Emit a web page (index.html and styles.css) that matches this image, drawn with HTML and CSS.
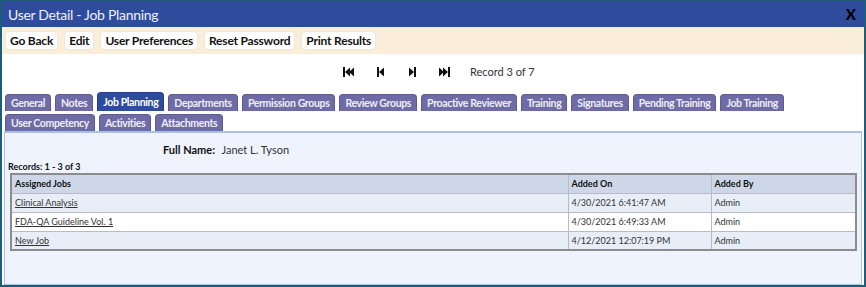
FILE: index.html
```html
<!DOCTYPE html>
<html lang="en">
  <head>
    <meta charset="UTF-8" />
    <meta name="viewport" content="width=device-width, initial-scale=1.0" />
    <title>User Detail - Job Planning</title>
    <link rel="stylesheet" href="styles.css">
  </head>
  <body>
    <div class="frame">
      <div class="titlebar">
        <span class="title">User Detail - Job Planning</span>
        <span class="close">X</span>
      </div>

      <div class="toolbar">
        <button class="btn">Go Back</button>
        <button class="btn">Edit</button>
        <button class="btn">User Preferences</button>
        <button class="btn">Reset Password</button>
        <button class="btn">Print Results</button>
      </div>

      <div class="pager">
        <!-- first -->
        <svg class="nav-icon" width="12" height="10" viewBox="0 0 12 10">
          <rect x="0" y="0" width="2" height="10" />
          <polygon points="2,5 7,0.5 7,9.5" />
          <polygon points="6,5 11,0.5 11,9.5" />
        </svg>
        <!-- prev -->
        <svg class="nav-icon" width="8" height="10" viewBox="0 0 8 10">
          <rect x="0" y="0" width="2" height="10" />
          <polygon points="2,5 7,0.5 7,9.5" />
        </svg>
        <!-- next -->
        <svg class="nav-icon" width="8" height="10" viewBox="0 0 8 10">
          <polygon points="1,0.5 6,5 1,9.5" />
          <rect x="6" y="0" width="2" height="10" />
        </svg>
        <!-- last -->
        <svg class="nav-icon" width="12" height="10" viewBox="0 0 12 10">
          <polygon points="1,0.5 6,5 1,9.5" />
          <polygon points="5,0.5 10,5 5,9.5" />
          <rect x="10" y="0" width="2" height="10" />
        </svg>
        <span class="record">Record 3 of 7</span>
      </div>

      <div class="tabs">
        <div class="tab">General</div>
        <div class="tab">Notes</div>
        <div class="tab active">Job Planning</div>
        <div class="tab">Departments</div>
        <div class="tab">Permission Groups</div>
        <div class="tab">Review Groups</div>
        <div class="tab">Proactive Reviewer</div>
        <div class="tab">Training</div>
        <div class="tab">Signatures</div>
        <div class="tab">Pending Training</div>
        <div class="tab">Job Training</div>
        <div class="tab">User Competency</div>
        <div class="tab">Activities</div>
        <div class="tab">Attachments</div>
      </div>

      <div class="panel">
        <div class="fullname">
          <span class="label">Full Name:</span>
          <span>Janet L. Tyson</span>
        </div>
        <p class="records">Records: 1 - 3 of 3</p>
        <table class="grid">
          <thead>
            <tr>
              <th class="col-job">Assigned Jobs</th>
              <th class="col-on">Added On</th>
              <th>Added By</th>
            </tr>
          </thead>
          <tbody>
            <tr class="alt">
              <td><a href="#">Clinical Analysis</a></td>
              <td>4/30/2021 6:41:47 AM</td>
              <td>Admin</td>
            </tr>
            <tr>
              <td><a href="#">FDA-QA Guideline Vol. 1</a></td>
              <td>4/30/2021 6:49:33 AM</td>
              <td>Admin</td>
            </tr>
            <tr class="alt">
              <td><a href="#">New Job</a></td>
              <td>4/12/2021 12:07:19 PM</td>
              <td>Admin</td>
            </tr>
          </tbody>
        </table>
      </div>
    </div>
  </body>
</html>
```

FILE: styles.css
```css
* {
  padding: 0;
  margin: 0;
  box-sizing: border-box;
  font-family: Lato, "Open Sans", Arial, sans-serif;
}

body {
  background-color: #ffffff;
}

/* moldura externa da janela */
.frame {
  width: 866px;
  height: 287px;
  border: 2px solid #1d5d78;
  border-top-width: 1px;
  background-color: #ffffff;
}

.titlebar {
  height: 26px;
  background-color: #2f4b9c;
  display: flex;
  align-items: center;
  justify-content: space-between;
  padding: 0 8px 0 6px;
}

.title {
  color: #eef1fa;
  font-size: 14px;
  letter-spacing: -0.3px;
}

.close {
  color: #000000;
  font-weight: 900;
  font-size: 15px;
}

/* barra de botões */
.toolbar {
  height: 27px;
  background-color: #faeedb;
  display: flex;
  align-items: center;
  gap: 6px;
  padding: 0 3px;
}

.btn {
  background-color: #ffffff;
  border: 1px solid #efe6d6;
  border-radius: 4px;
  height: 19px;
  padding: 0 4px;
  font-size: 12px;
  font-weight: 700;
  color: #111111;
  letter-spacing: -0.2px;
}

/* navegação de registros */
.pager {
  height: 35px;
  display: flex;
  align-items: center;
  padding-left: 341px;
}

.nav-icon {
  fill: #111111;
  margin-right: 22px;
}

.nav-icon:nth-of-type(2) {
  margin-right: 23px;
}

.record {
  font-size: 11px;
  color: #333333;
  margin-left: -2px;
}

/* abas */
.tabs {
  display: flex;
  flex-wrap: wrap;
  align-items: flex-end;
  gap: 3px 4px;
  padding: 3px 60px 0 3px;
}

.tab {
  height: 17px;
  line-height: 17px;
  padding: 0 5px;
  background-color: #6f6ba6;
  color: #eeeef6;
  font-size: 10.5px;
  font-weight: 700;
  border-radius: 4px 4px 0 0;
  letter-spacing: -0.35px;
  border: 1px solid #5f5b92;
  border-bottom: none;
}

.tab.active {
  background-color: #2f4b9c;
  color: #ffffff;
  height: 19px;
  line-height: 19px;
  border-color: #26408a;
}

/* painel de conteúdo */
.panel {
  margin: 0 2px 0 2px;
  height: 154px;
  background-color: #eef3fd;
  border: 1px solid #a9bfe6;
  border-top-width: 2px;
}

.fullname {
  padding: 10px 0 0 158px;
  font-size: 11px;
  color: #333333;
  height: 28px;
}

.fullname .label {
  font-weight: 700;
  color: #111111;
  margin-right: 4px;
}

.records {
  font-size: 9px;
  font-weight: 700;
  color: #111111;
  margin-left: 3px;
  height: 10px;
}

.grid {
  width: 847px;
  margin-left: 5px;
  margin-top: 2px;
  border-collapse: collapse;
  border: 2px solid #8c8c8c;
  font-size: 9px;
  color: #333333;
}

.grid th,
.grid td {
  height: 19px;
  text-align: left;
  padding: 0 3px;
  border: 1px solid #b5bcc8;
}

.grid th {
  background-color: #cdd7e7;
  font-weight: 700;
  color: #111111;
}

.grid .col-job {
  width: 557px;
}

.grid .col-on {
  width: 143px;
}

.grid tr {
  background-color: #ffffff;
}

.grid tr.alt {
  background-color: #e8eef8;
}

.grid a {
  color: #333333;
}
```
